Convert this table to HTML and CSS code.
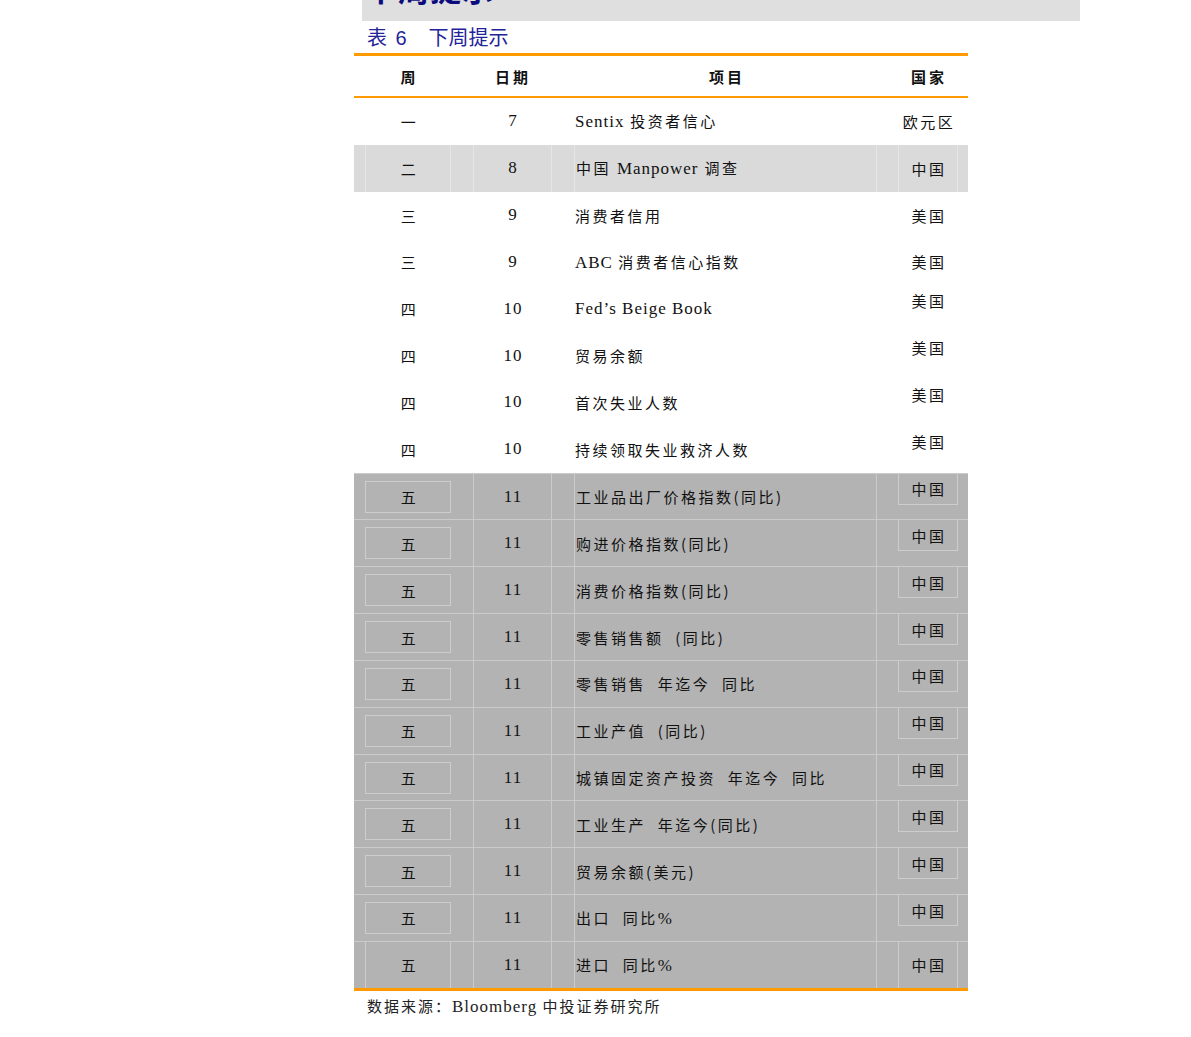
FILE: index.html
```html
<!DOCTYPE html>
<html lang="zh-CN">
<head>
<meta charset="utf-8">
<title>下周提示</title>
<link rel="stylesheet" href="styles.css">
</head>
<body>
<div class="page">
  <div class="topbar"><h1 class="heading">下周提示</h1></div>
  <div class="caption">表 <span class="num">6</span>　下周提示</div>

  <div class="table">
    <div class="row head">
      <div class="c-week"><span>周</span></div>
      <div class="c-day"><span>日期</span></div>
      <div class="c-item center"><span>项目</span></div>
      <div class="c-country"><span>国家</span></div>
    </div>

    <div class="row plain">
      <div class="c-week"><span>一</span></div>
      <div class="c-day"><span class="lat">7</span></div>
      <div class="c-item"><span><span class="lat">Sentix</span> 投资者信心</span></div>
      <div class="c-country"><span>欧元区</span></div>
    </div>
    <div class="row light">
      <div class="c-week"><span>二</span></div>
      <div class="c-day"><span class="lat">8</span></div>
      <div class="c-item"><span>中国 <span class="lat">Manpower</span> 调查</span></div>
      <div class="c-country"><span>中国</span></div>
    </div>
    <div class="row plain">
      <div class="c-week"><span>三</span></div>
      <div class="c-day"><span class="lat">9</span></div>
      <div class="c-item"><span>消费者信用</span></div>
      <div class="c-country"><span>美国</span></div>
    </div>
    <div class="row plain">
      <div class="c-week"><span>三</span></div>
      <div class="c-day"><span class="lat">9</span></div>
      <div class="c-item"><span><span class="lat">ABC </span>消费者信心指数</span></div>
      <div class="c-country"><span>美国</span></div>
    </div>
    <div class="row plain top">
      <div class="c-week"><span>四</span></div>
      <div class="c-day"><span class="lat">10</span></div>
      <div class="c-item"><span class="lat">Fed’s Beige Book</span></div>
      <div class="c-country"><span>美国</span></div>
    </div>
    <div class="row plain top">
      <div class="c-week"><span>四</span></div>
      <div class="c-day"><span class="lat">10</span></div>
      <div class="c-item"><span>贸易余额</span></div>
      <div class="c-country"><span>美国</span></div>
    </div>
    <div class="row plain top">
      <div class="c-week"><span>四</span></div>
      <div class="c-day"><span class="lat">10</span></div>
      <div class="c-item"><span>首次失业人数</span></div>
      <div class="c-country"><span>美国</span></div>
    </div>
    <div class="row plain top">
      <div class="c-week"><span>四</span></div>
      <div class="c-day"><span class="lat">10</span></div>
      <div class="c-item"><span>持续领取失业救济人数</span></div>
      <div class="c-country"><span>美国</span></div>
    </div>

    <div class="row dark top">
      <div class="c-week"><span>五</span></div>
      <div class="c-day"><span class="lat">11</span></div>
      <div class="c-item"><span>工业品出厂价格指数(同比)</span></div>
      <div class="c-country"><span>中国</span></div>
    </div>
    <div class="row dark top">
      <div class="c-week"><span>五</span></div>
      <div class="c-day"><span class="lat">11</span></div>
      <div class="c-item"><span>购进价格指数(同比)</span></div>
      <div class="c-country"><span>中国</span></div>
    </div>
    <div class="row dark top">
      <div class="c-week"><span>五</span></div>
      <div class="c-day"><span class="lat">11</span></div>
      <div class="c-item"><span>消费价格指数(同比)</span></div>
      <div class="c-country"><span>中国</span></div>
    </div>
    <div class="row dark top">
      <div class="c-week"><span>五</span></div>
      <div class="c-day"><span class="lat">11</span></div>
      <div class="c-item"><span>零售销售额&nbsp; (同比)</span></div>
      <div class="c-country"><span>中国</span></div>
    </div>
    <div class="row dark top">
      <div class="c-week"><span>五</span></div>
      <div class="c-day"><span class="lat">11</span></div>
      <div class="c-item"><span>零售销售&nbsp; 年迄今&nbsp; 同比</span></div>
      <div class="c-country"><span>中国</span></div>
    </div>
    <div class="row dark top">
      <div class="c-week"><span>五</span></div>
      <div class="c-day"><span class="lat">11</span></div>
      <div class="c-item"><span>工业产值&nbsp; (同比)</span></div>
      <div class="c-country"><span>中国</span></div>
    </div>
    <div class="row dark top">
      <div class="c-week"><span>五</span></div>
      <div class="c-day"><span class="lat">11</span></div>
      <div class="c-item"><span>城镇固定资产投资&nbsp; 年迄今&nbsp; 同比</span></div>
      <div class="c-country"><span>中国</span></div>
    </div>
    <div class="row dark top">
      <div class="c-week"><span>五</span></div>
      <div class="c-day"><span class="lat">11</span></div>
      <div class="c-item"><span>工业生产&nbsp; 年迄今(同比)</span></div>
      <div class="c-country"><span>中国</span></div>
    </div>
    <div class="row dark top">
      <div class="c-week"><span>五</span></div>
      <div class="c-day"><span class="lat">11</span></div>
      <div class="c-item"><span>贸易余额(美元)</span></div>
      <div class="c-country"><span>中国</span></div>
    </div>
    <div class="row dark top">
      <div class="c-week"><span>五</span></div>
      <div class="c-day"><span class="lat">11</span></div>
      <div class="c-item"><span>出口&nbsp; 同比<span class="lat">%</span></span></div>
      <div class="c-country"><span>中国</span></div>
    </div>
    <div class="row dark last">
      <div class="c-week"><span>五</span></div>
      <div class="c-day"><span class="lat">11</span></div>
      <div class="c-item"><span>进口&nbsp; 同比<span class="lat">%</span></span></div>
      <div class="c-country"><span>中国</span></div>
    </div>
  </div>

  <div class="source">数据来源：<span class="lat">Bloomberg</span> 中投证券研究所</div>
</div>
</body>
</html>
```

FILE: styles.css
```css
* { box-sizing: border-box; }

html, body {
  margin: 0;
  padding: 0;
  background: #ffffff;
}

body {
  font-family: "Noto Sans CJK SC", "Liberation Sans", sans-serif;
  color: #111111;
}

.page {
  padding-left: 354px;
  width: 1191px;
}

.topbar {
  margin-left: 8px;
  width: 718px;
  height: 21px;
  background: #dfdfdf;
  overflow: hidden;
}

.heading {
  margin: -33px 0 0 4px;
  font-size: 31px;
  line-height: 42px;
  font-weight: 700;
  color: #0b0b7e;
  letter-spacing: 1px;
}

.caption {
  height: 32px;
  padding-left: 13px;
  font-size: 20px;
  line-height: 32px;
  color: #23239a;
  letter-spacing: 0;
  font-weight: 400;
}

.caption .num {
  font-family: "Liberation Sans", sans-serif;
  margin-left: 4px;
  margin-right: 2px;
}

.table {
  width: 614px;
  border-top: 3px solid #ff9a00;
  border-bottom: 3px solid #ff9a00;
}

.row {
  display: grid;
  grid-template-columns: 11px 86px 22px 79px 22px 303px 21px 60px 10px;
  height: 46.84px;
  font-size: 15px;
  letter-spacing: 2.5px;
}

.row > div {
  display: flex;
  align-items: center;
  white-space: nowrap;
}

.c-week { grid-column: 2; justify-content: center; padding-left: 3px; }
.c-day { grid-column: 4; justify-content: center; padding-left: 1px; }
.c-item { grid-column: 6; justify-content: flex-start; padding-left: 1px; }
.c-item.center { justify-content: center; padding-left: 3px; }
.c-country { grid-column: 8; justify-content: center; padding-left: 2px; }

.lat {
  font-family: "Liberation Serif", "DejaVu Serif", serif;
  font-size: 17px;
  letter-spacing: 1px;
  white-space: pre;
}

/* header */
.row.head {
  height: 42px;
  border-bottom: 2px solid #ff9a00;
  font-weight: 700;
  letter-spacing: 3px;
}

/* country text raised to the top of its row */
.row.top .c-country {
  align-self: start;
  height: 31px;
}

/* light grey row */
.row.light {
  background: #dadada;
}
.row.light > div {
  border-left: 1px solid #e6e6e6;
  border-right: 1px solid #e6e6e6;
}

/* dark grey rows */
.row.dark {
  background: #b3b3b3;
  border-top: 1px solid #cbcbcb;
}
.row.dark .c-week {
  align-self: center;
  height: 32px;
  border: 1px solid #cdcdcd;
}
.row.dark .c-day,
.row.dark .c-item {
  border-left: 1px solid #cbcbcb;
  border-right: 1px solid #cbcbcb;
}
.row.dark .c-country {
  border-left: 1px solid #cdcdcd;
  border-right: 1px solid #cdcdcd;
  border-bottom: 1px solid #cdcdcd;
}
.row.dark.last .c-week {
  height: auto;
  align-self: stretch;
  border-top: 0;
  border-bottom: 0;
}
.row.dark.last .c-country {
  border-bottom: 0;
}

.source {
  height: 30px;
  padding-left: 13px;
  font-size: 15px;
  line-height: 30px;
  letter-spacing: 2px;
  color: #222222;
}
```
